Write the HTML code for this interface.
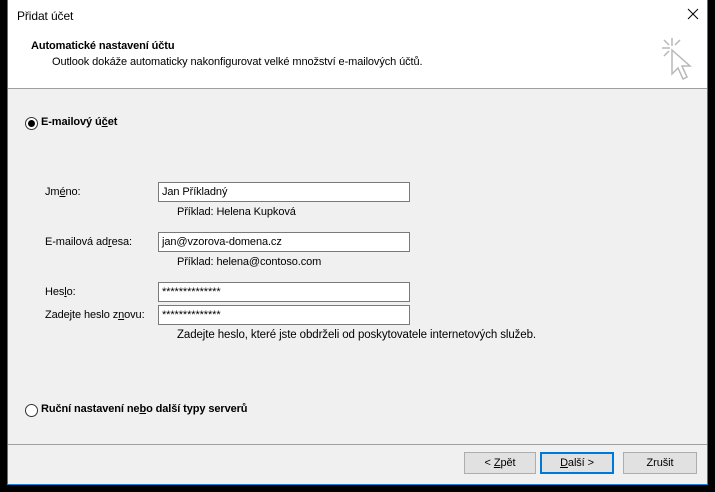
<!DOCTYPE html>
<html><head><meta charset="utf-8"><style>
body{margin:0;width:715px;height:492px;background:#000;position:relative;overflow:hidden;font-family:"Liberation Sans",sans-serif;font-size:11px;letter-spacing:-0.1px;color:#000}
.win{position:absolute;left:7px;top:0;width:699px;height:484px;border:1px solid #1883d7;border-top:none;background:#f0f0f0}
.hdr{position:absolute;left:0;top:0;width:699px;height:88px;background:#fff;border-bottom:1px solid #a0a0a0}
.a{position:absolute;white-space:nowrap}
.inp{position:absolute;left:150px;width:247px;height:18px;background:#fff;border:1px solid #7a7a7a;box-sizing:content-box;line-height:18px;padding-left:3px}
.radio{position:absolute;width:11px;height:11px;border:1px solid #333;border-radius:50%;background:#fff}
.btn{position:absolute;top:452px;height:20px;border:1px solid #adadad;background:#e1e1e1;text-align:center;line-height:20px}
u{text-decoration:underline}
</style></head><body>
<div class="win">
 <div class="hdr">
  <div class="a" style="left:9px;top:9px;font-size:12px">Přidat účet</div>
  <svg class="a" style="left:679px;top:8px" width="12" height="12" viewBox="0 0 12 12" stroke="#000" stroke-width="1"><path d="M1 1L11 11M11 1L1 11"/></svg>
  <div class="a" style="left:23px;top:40px;font-weight:bold">Automatické nastavení účtu</div>
  <div class="a" style="left:44px;top:56px">Outlook dokáže automaticky nakonfigurovat velké množství e-mailových účtů.</div>
  <svg class="a" style="left:650px;top:36px" width="36" height="50" viewBox="0 0 36 50" fill="none" stroke="#b8b8b8" stroke-width="1.5">
   <path d="M14 2v8M4 12h8M6 4l5 5M22 4l-5 5M6 20l5-5"/>
   <path d="M14 14l0 24 6-6 5 11 4-2-5-11 8 0z"/>
  </svg>
 </div>
 <div class="radio" style="left:17px;top:117px"><div style="position:absolute;left:2px;top:2px;width:7px;height:7px;border-radius:50%;background:#000"></div></div>
 <div class="a" style="left:33px;top:116px;font-weight:bold">E-mailový ú<u>č</u>et</div>
 <div class="a" style="left:37px;top:186px">Jm<u>é</u>no:</div>
 <div class="inp" style="top:182px">Jan Příkladný</div>
 <div class="a" style="left:169px;top:206px">Příklad: Helena Kupková</div>
 <div class="a" style="left:37px;top:236px">E-mailová ad<u>r</u>esa:</div>
 <div class="inp" style="top:232px">jan@vzorova-domena.cz</div>
 <div class="a" style="left:169px;top:256px">Příklad: helena@contoso.com</div>
 <div class="a" style="left:37px;top:286px">Hes<u>l</u>o:</div>
 <div class="inp" style="top:282px">**************</div>
 <div class="a" style="left:37px;top:309px">Zadejte heslo z<u>n</u>ovu:</div>
 <div class="inp" style="top:305px">**************</div>
 <div class="a" style="left:169px;top:329px;font-size:11.5px">Zadejte heslo, které jste obdrželi od poskytovatele internetových služeb.</div>
 <div class="radio" style="left:17px;top:404px"></div>
 <div class="a" style="left:33px;top:403px;font-weight:bold">Ruční nastavení ne<u>b</u>o další typy serverů</div>
 <div style="position:absolute;left:0;top:444px;width:699px;height:1px;background:#a0a0a0"></div>
 <div class="btn" style="left:456px;width:70px">&lt; <u>Z</u>pět</div>
 <div class="btn" style="left:532px;width:70px;border:2px solid #0078d7;height:18px;line-height:18px"><u>D</u>alší &gt;</div>
 <div class="btn" style="left:615px;width:72px">Zrušit</div>
</div>
</body></html>
